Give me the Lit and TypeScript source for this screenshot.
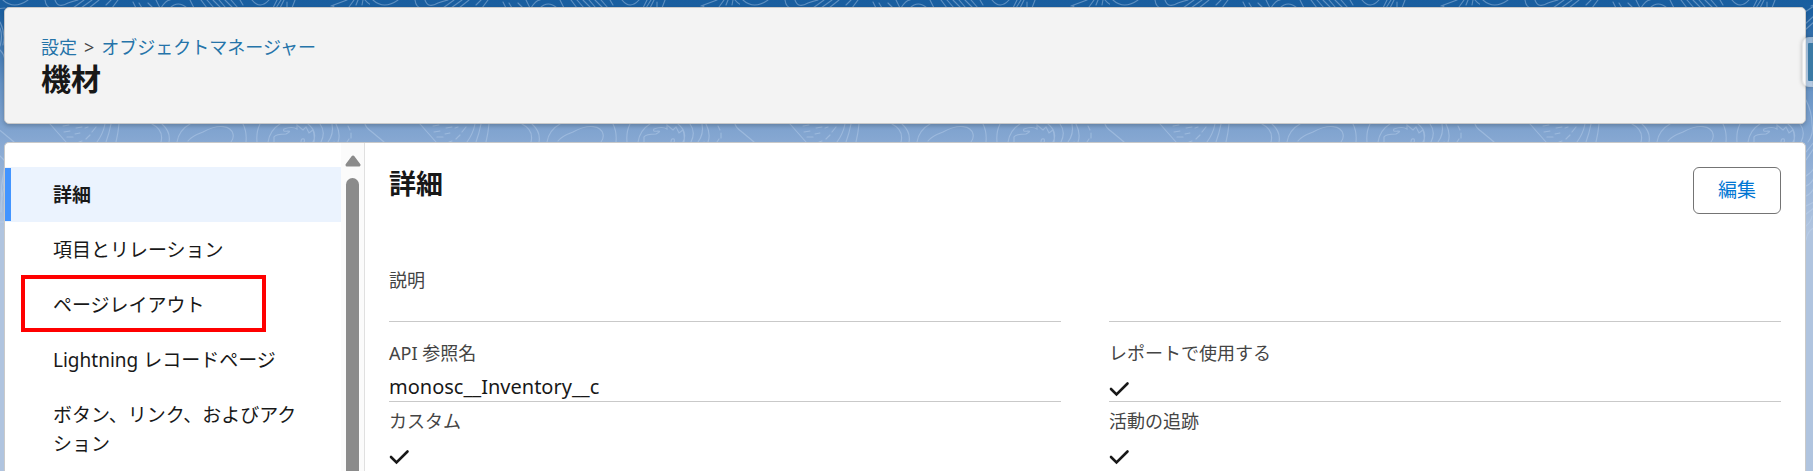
import { LitElement, html, css, svg, nothing } from "lit";
import { customElement, property } from "lit/decorators.js";

interface Field {
  label: string;
  value?: string;
  checked?: boolean;
}

const NAV_ITEMS: string[] = [
  "詳細",
  "項目とリレーション",
  "ページレイアウト",
  "Lightning レコードページ",
  "ボタン、リンク、およびアクション",
];
const CURRENT = 0;
const OUTLINED = 2;

const FIELD_ROWS: (Field | null)[][] = [
  [{ label: "説明", value: "" }, null],
  [
    { label: "API 参照名", value: "monosc__Inventory__c" },
    { label: "レポートで使用する", checked: true },
  ],
  [
    { label: "カスタム", checked: true },
    { label: "活動の追跡", checked: true },
  ],
];

/** Topographic wallpaper that fades out down the page. */
@customElement("topo-backdrop")
export class TopoBackdrop extends LitElement {
  static styles = css`
    :host {
      display: block;
      position: absolute;
      inset: 0;
      background: linear-gradient(#195e9f 0, #1c60a1 12px, #6592c4 84px, #87a8d2 142px, #b0c4df 230px);
    }
    .lines {
      display: block;
      width: 100%;
      height: 250px;
    }
  `;

  private contours = svg`
    <path d="M3 0Q14 10 28 0M45 0Q46 8 52 8M55 0Q58 9 68 3Q74 1 78 0M73 8L84 0M81 8L92 0M89 8L99 0M106 5L111 0M112 8L118 0
      M133 2L136 8M139 3L142 8M148 3L153 8M156 0L160 8M161 8Q166 0 170 0M170 8Q178 0 187 8M190 0L194 8
      M201 0L207 8M207 0L214 8M213 0L221 8M219 0L226 8M225 0L233 8M231 0L238 8M240 0L243 5M252 0Q260 10 269 0
      M273 8L277 0M276 8L281 0M280 8L284 0M287 2V7M295 0L292 8M331 6L347 0M349 7L354 0M358 0L356 5M363 0L362 5M365 0Q374 12 398 0"/>
    <path d="M-5 124Q-4 128 2 132L14 142M365 124Q366 128 372 132L384 142M50 124L66 142M63 126L69 125M64 132L70 131M67 137L73 137
      M76 128L82 127M75 134L80 133M96 127L92 132M90 135L86 139M82 141L79 142M85 128L88 127
      M105 124Q103 134 97 142M111 124Q109 134 106 142M119 124Q118 134 116 142
      M152 124Q164 130 161 142M162 124Q171 132 169 142M190 124Q179 130 177 142
      M188 141Q192 136 203 132C219 123 231 126 233 134Q234 138 231 142M243 124Q247 132 246 142
      M260 124Q256 132 257 142M280 124Q270 130 268 142M274 142V137Q276 134 286 134Q292 131 288 131Q282 132 284 129Q292 126 297 129L297 125L303 130L306 127L309 133L313 130Q315 136 314 142
      M301 142Q301 138 304 139Q305 141 304 142M308 124Q318 132 313 142M320 124Q326 132 321 142M336 124Q341 134 338 142
      M348 126L350 130M351 133V138M349 139L347 142"/>
    <path d="M5 8Q-2 8 -8 12M0 22Q6 34 3 45M0 28Q3 36 0 46M0 50Q4 54 5 60M0 156L5 161M5 164Q2 178 4 188M5 170Q0 184 2 200M5 184Q1 196 1 212M0 222L5 222"/>
    <path d="M325 12L334 6M325 24L334 16M325 30L334 22M326 100Q332 112 332 124M332 124Q334 134 328 142M326 152L334 142M326 160L334 148
      M326 176Q332 172 334 168M326 186Q331 184 334 178M326 196Q331 194 334 188M326 206L334 202M326 214L334 208M326 226Q331 222 332 216M326 240Q328 230 334 228"/>
  `;

  render() {
    return html`
      <svg class="lines" aria-hidden="true">
        <defs>
          <pattern id="topo" width="370" height="250" patternUnits="userSpaceOnUse">
            <g fill="none" stroke="#c4d8ef" stroke-opacity=".4" stroke-width="1.1" stroke-linecap="round">
              ${this.contours}
            </g>
          </pattern>
        </defs>
        <rect width="100%" height="250" fill="url(#topo)"></rect>
      </svg>
    `;
  }
}

@customElement("detail-field")
export class DetailField extends LitElement {
  @property({ attribute: false }) field: Field | null = null;

  static styles = css`
    :host {
      display: block;
    }
    dl,
    dd {
      margin: 0;
    }
    .label {
      font-size: 18px;
      line-height: 27px;
      color: #444;
    }
    .value {
      box-sizing: border-box;
      display: flex;
      align-items: center;
      min-height: 22px;
      margin-top: 5px;
      font-size: 20px;
      line-height: 29px;
      color: #181818;
    }
    .ticked {
      min-height: 29px;
      padding-top: 4px;
    }
    .check {
      display: block;
      width: 21px;
      height: 16px;
    }
  `;

  render() {
    if (!this.field) return nothing;
    const { label, value, checked } = this.field;
    return html`
      <dl>
        <dt class="label">${label}</dt>
        <dd class="value ${checked ? "ticked" : ""}">
          ${checked
            ? html`<svg class="check" viewBox="0 0 21 16" role="img" aria-label="オン">
                <path d="M2 8L7.5 13.5L18.5 2.5" fill="none" stroke="#181818" stroke-width="2.6" stroke-linecap="round" />
              </svg>`
            : value}
        </dd>
      </dl>
    `;
  }
}

@customElement("app-root")
export class AppRoot extends LitElement {
  static styles = css`
    :host {
      display: block;
      position: relative;
      height: 100vh;
      overflow: hidden;
      font-family: "Noto Sans", "Noto Sans CJK JP", sans-serif;
      color: #181818;
    }
    * {
      box-sizing: border-box;
    }
    h1,
    h2,
    ul {
      margin: 0;
      padding: 0;
    }
    a {
      text-decoration: none;
      color: inherit;
    }
    .page {
      position: relative;
      display: flex;
      flex-direction: column;
      gap: 18px;
      height: 100%;
      padding: 7px 7px 0 4px;
    }
    .card {
      border: 1px solid #c9c9c9;
      border-radius: 5px;
    }
    .header {
      padding: 26px 36px;
      background: #f3f3f3;
      box-shadow: 0 2px 4px rgba(0, 0, 0, 0.2);
    }
    .crumbs {
      display: flex;
      gap: 7px;
      font-size: 18px;
      line-height: 27px;
      color: #444;
    }
    .crumbs a {
      color: #2574a9;
    }
    .title {
      font-size: 30px;
      line-height: 36px;
      font-weight: 700;
    }
    .body {
      flex: 1;
      min-height: 0;
      display: grid;
      grid-template-columns: 336px 24px 1fr;
      overflow: hidden;
      background: #fff;
      border-bottom: 0;
      border-radius: 5px 5px 0 0;
    }
    .nav {
      min-height: 0;
      padding-top: 24px;
    }
    .nav ul {
      list-style: none;
    }
    .item {
      position: relative;
    }
    .link {
      display: block;
      padding: 14px 36px 12px 48px;
      font-size: 19px;
      line-height: 29px;
    }
    .current {
      background: linear-gradient(#4294ff, #4294ff) left center / 6px 53px no-repeat #ebf3fe;
      font-weight: 700;
    }
    .outline {
      position: absolute;
      inset: -2px 75px 0 16px;
      border: 4px solid #f00;
      pointer-events: none;
    }
    .track {
      display: flex;
      flex-direction: column;
      align-items: center;
      gap: 11px;
      min-height: 0;
      padding-top: 12px;
      background: #fbfbfb;
      border-right: 1px solid #e0e0e0;
    }
    .arrow {
      flex: none;
      display: block;
      width: 16px;
      height: 12px;
    }
    .thumb {
      flex: 1;
      width: 13px;
      border-radius: 7px 7px 0 0;
      background: #8b8b8b;
    }
    .main {
      min-width: 0;
      padding: 24px 24px 0;
    }
    .bar {
      display: flex;
      justify-content: space-between;
      align-items: flex-start;
      margin-bottom: 47px;
    }
    .heading {
      font-size: 27px;
      line-height: 34px;
      font-weight: 700;
    }
    .edit {
      padding: 8px 24px;
      border: 1px solid #747474;
      border-radius: 6px;
      background: #fff;
      color: #0176d3;
      font: inherit;
      font-size: 19px;
      line-height: 29px;
    }
    .row {
      display: grid;
      grid-template-columns: 1fr 1fr;
      column-gap: 48px;
    }
    .cell {
      padding-top: 6px;
      border-bottom: 1px solid #c9c9c9;
    }
    .spaced .cell {
      padding-top: 18px;
    }
    .row:last-child .cell {
      border-bottom: 0;
    }
    .flap {
      position: absolute;
      top: 37px;
      right: 0;
      width: 11px;
      height: 50px;
      border: 6px solid rgba(255, 255, 255, 0.5);
      border-right: 0;
      border-radius: 7px 0 0 7px;
      background: #3b7aa5 padding-box;
      box-shadow: 0 0 4px rgba(0, 0, 0, 0.25);
    }
  `;

  render() {
    return html`
      <topo-backdrop></topo-backdrop>
      <div class="page">
        <header class="card header">
          <nav class="crumbs" aria-label="パンくずリスト">
            <a href="#setup">設定</a>
            <span>&gt;</span>
            <a href="#object-manager">オブジェクトマネージャー</a>
          </nav>
          <h1 class="title">機材</h1>
        </header>
        <div class="card body">
          <nav class="nav">
            <ul>
              ${NAV_ITEMS.map(
                (text, i) => html`
                  <li class="item">
                    <a class="link ${i === CURRENT ? "current" : ""}" href="#section-${i}">${text}</a>
                    ${i === OUTLINED ? html`<div class="outline"></div>` : nothing}
                  </li>
                `,
              )}
            </ul>
          </nav>
          <div class="track" aria-hidden="true">
            <svg class="arrow" viewBox="0 0 16 12">
              <path d="M8 2L14 10H2Z" fill="#8b8b8b" stroke="#8b8b8b" stroke-width="3" stroke-linejoin="round" />
            </svg>
            <div class="thumb"></div>
          </div>
          <main class="main">
            <div class="bar">
              <h2 class="heading">詳細</h2>
              <button class="edit" type="button">編集</button>
            </div>
            ${FIELD_ROWS.map(
              (row, i) => html`
                <div class="row ${i === 1 ? "spaced" : ""}">
                  ${row.map((field) => html`<div class="cell"><detail-field .field=${field}></detail-field></div>`)}
                </div>
              `,
            )}
          </main>
        </div>
      </div>
      <div class="flap"></div>
    `;
  }
}
